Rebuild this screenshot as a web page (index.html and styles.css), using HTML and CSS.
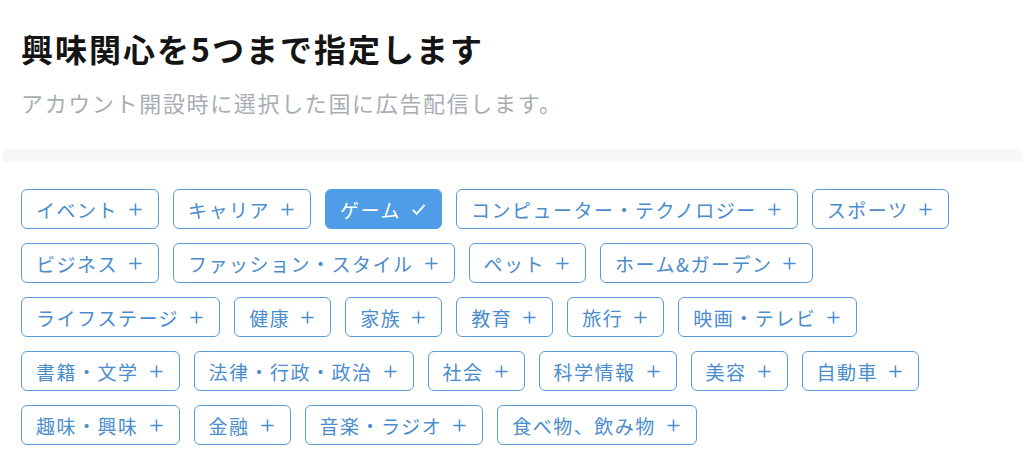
FILE: index.html
```html
<!DOCTYPE html>
<html lang="ja">
<head>
    <meta charset="UTF-8">
    <meta name="viewport" content="width=device-width, initial-scale=1.0">
    <title>興味関心</title>
    <link rel="stylesheet" href="styles.css">
</head>
<body>
    <header class="intro">
        <h1>興味関心を5つまで指定します</h1>
        <p class="lead">アカウント開設時に選択した国に広告配信します。</p>
    </header>
    <div class="divider"></div>
    <ul class="tags">
        <li class="tag">イベント<svg class="mark" viewBox="0 0 16 16"><path d="M8 1.5v13M1.5 8h13"/></svg></li>
        <li class="tag">キャリア<svg class="mark" viewBox="0 0 16 16"><path d="M8 1.5v13M1.5 8h13"/></svg></li>
        <li class="tag selected">ゲーム<svg class="mark" viewBox="0 0 16 16"><path d="M2 8.5l4 4.2L14.5 3"/></svg></li>
        <li class="tag">コンピューター・テクノロジー<svg class="mark" viewBox="0 0 16 16"><path d="M8 1.5v13M1.5 8h13"/></svg></li>
        <li class="tag">スポーツ<svg class="mark" viewBox="0 0 16 16"><path d="M8 1.5v13M1.5 8h13"/></svg></li>
        <li class="tag">ビジネス<svg class="mark" viewBox="0 0 16 16"><path d="M8 1.5v13M1.5 8h13"/></svg></li>
        <li class="tag">ファッション・スタイル<svg class="mark" viewBox="0 0 16 16"><path d="M8 1.5v13M1.5 8h13"/></svg></li>
        <li class="tag">ペット<svg class="mark" viewBox="0 0 16 16"><path d="M8 1.5v13M1.5 8h13"/></svg></li>
        <li class="tag">ホーム&amp;ガーデン<svg class="mark" viewBox="0 0 16 16"><path d="M8 1.5v13M1.5 8h13"/></svg></li>
        <li class="tag">ライフステージ<svg class="mark" viewBox="0 0 16 16"><path d="M8 1.5v13M1.5 8h13"/></svg></li>
        <li class="tag">健康<svg class="mark" viewBox="0 0 16 16"><path d="M8 1.5v13M1.5 8h13"/></svg></li>
        <li class="tag">家族<svg class="mark" viewBox="0 0 16 16"><path d="M8 1.5v13M1.5 8h13"/></svg></li>
        <li class="tag">教育<svg class="mark" viewBox="0 0 16 16"><path d="M8 1.5v13M1.5 8h13"/></svg></li>
        <li class="tag">旅行<svg class="mark" viewBox="0 0 16 16"><path d="M8 1.5v13M1.5 8h13"/></svg></li>
        <li class="tag">映画・テレビ<svg class="mark" viewBox="0 0 16 16"><path d="M8 1.5v13M1.5 8h13"/></svg></li>
        <li class="tag">書籍・文学<svg class="mark" viewBox="0 0 16 16"><path d="M8 1.5v13M1.5 8h13"/></svg></li>
        <li class="tag">法律・行政・政治<svg class="mark" viewBox="0 0 16 16"><path d="M8 1.5v13M1.5 8h13"/></svg></li>
        <li class="tag">社会<svg class="mark" viewBox="0 0 16 16"><path d="M8 1.5v13M1.5 8h13"/></svg></li>
        <li class="tag">科学情報<svg class="mark" viewBox="0 0 16 16"><path d="M8 1.5v13M1.5 8h13"/></svg></li>
        <li class="tag">美容<svg class="mark" viewBox="0 0 16 16"><path d="M8 1.5v13M1.5 8h13"/></svg></li>
        <li class="tag">自動車<svg class="mark" viewBox="0 0 16 16"><path d="M8 1.5v13M1.5 8h13"/></svg></li>
        <li class="tag">趣味・興味<svg class="mark" viewBox="0 0 16 16"><path d="M8 1.5v13M1.5 8h13"/></svg></li>
        <li class="tag">金融<svg class="mark" viewBox="0 0 16 16"><path d="M8 1.5v13M1.5 8h13"/></svg></li>
        <li class="tag">音楽・ラジオ<svg class="mark" viewBox="0 0 16 16"><path d="M8 1.5v13M1.5 8h13"/></svg></li>
        <li class="tag">食べ物、飲み物<svg class="mark" viewBox="0 0 16 16"><path d="M8 1.5v13M1.5 8h13"/></svg></li>
    </ul>
</body>
</html>
```

FILE: styles.css
```css
body{
    margin:0;
    padding:0;
    background-color:#fff;
    font-family:"Noto Sans CJK JP","Noto Sans",sans-serif;
}
.intro{
    padding:24px 21px 0;
}
h1{
    margin:0;
    font-size:32px;
    font-weight:bold;
    line-height:48px;
    letter-spacing:2px;
    color:#141414;
}
.lead{
    margin:14px 0 0;
    font-size:22px;
    line-height:32px;
    letter-spacing:1.65px;
    color:#a8adb4;
}
.divider{
    height:13px;
    margin:31px 2px 0 3px;
    background-color:#f6f7f9;
}
.tags{
    list-style:none;
    margin:0;
    padding:27px 21px;
    display:flex;
    flex-wrap:wrap;
    gap:14px;
}
.tag{
    display:flex;
    align-items:center;
    height:40px;
    box-sizing:border-box;
    padding:0 15px 0 14px;
    border:1.5px solid #5d9bd6;
    border-radius:6px;
    font-size:19px;
    letter-spacing:1.5px;
    color:#4a8ccc;
}
.mark{
    width:15px;
    height:15px;
    margin-left:10px;
    fill:none;
    stroke:currentColor;
    stroke-width:1.6;
}
.tag.selected{
    background-color:#4f9de6;
    border-color:#4f9de6;
    color:#fff;
}
.tag.selected .mark{
    stroke-width:2;
}
```
